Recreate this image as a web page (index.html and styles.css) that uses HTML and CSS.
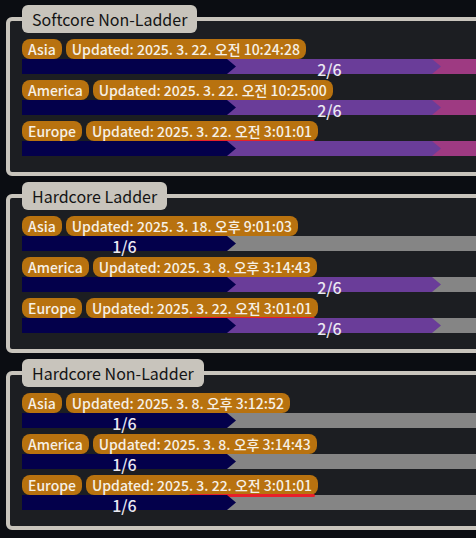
FILE: index.html
```html
<!DOCTYPE html>
<html lang="en">
<head>
<meta charset="utf-8">
<title>DClone Status</title>
<link rel="stylesheet" href="styles.css">
</head>
<body>
<main class="page">
  <fieldset class="group">
    <legend class="group-title">Softcore Non-Ladder</legend>
    <div class="rows">
      <div class="row">
        <div class="badges"><span class="badge">Asia</span><span class="badge">Updated: 2025. 3. 22. 오전 10:24:28</span></div>
        <div class="bar rest-magenta"><div class="seg s1"></div><div class="seg s2">2/6</div></div>
      </div>
      <div class="row">
        <div class="badges"><span class="badge">America</span><span class="badge">Updated: 2025. 3. 22. 오전 10:25:00</span></div>
        <div class="bar rest-magenta"><div class="seg s1"></div><div class="seg s2">2/6</div></div>
      </div>
      <div class="row">
        <div class="badges"><span class="badge">Europe</span><span class="badge">Updated: 2025<span class="mark">. 3. 22. 오전 3:01:01</span></span></div>
        <div class="bar rest-magenta"><div class="seg s1"></div><div class="seg s2"></div></div>
      </div>
    </div>
  </fieldset>
  <fieldset class="group">
    <legend class="group-title">Hardcore Ladder</legend>
    <div class="rows">
      <div class="row">
        <div class="badges"><span class="badge">Asia</span><span class="badge">Updated: 2025. 3. 18. 오후 9:01:03</span></div>
        <div class="bar rest-gray"><div class="seg s1">1/6</div></div>
      </div>
      <div class="row">
        <div class="badges"><span class="badge">America</span><span class="badge">Updated: 2025. 3. 8. 오후 3:14:43</span></div>
        <div class="bar rest-gray"><div class="seg s1"></div><div class="seg s2">2/6</div></div>
      </div>
      <div class="row">
        <div class="badges"><span class="badge">Europe</span><span class="badge">Updated: 2025<span class="mark">. 3. 22. 오전 3:01:01</span></span></div>
        <div class="bar rest-gray"><div class="seg s1"></div><div class="seg s2">2/6</div></div>
      </div>
    </div>
  </fieldset>
  <fieldset class="group">
    <legend class="group-title">Hardcore Non-Ladder</legend>
    <div class="rows">
      <div class="row">
        <div class="badges"><span class="badge">Asia</span><span class="badge">Updated: 2025. 3. 8. 오후 3:12:52</span></div>
        <div class="bar rest-gray"><div class="seg s1">1/6</div></div>
      </div>
      <div class="row">
        <div class="badges"><span class="badge">America</span><span class="badge">Updated: 2025. 3. 8. 오후 3:14:43</span></div>
        <div class="bar rest-gray"><div class="seg s1">1/6</div></div>
      </div>
      <div class="row">
        <div class="badges"><span class="badge">Europe</span><span class="badge">Updated: 2025<span class="mark">. 3. 22. 오전 3:01:01</span></span></div>
        <div class="bar rest-gray"><div class="seg s1">1/6</div></div>
      </div>
    </div>
  </fieldset>
</main>
</body>
</html>
```

FILE: styles.css
```css
html {
  overflow: hidden;
  background: #0b0d12;
}
body {
  margin: 0;
  font-family: "Noto Sans CJK KR", "Noto Sans", sans-serif;
}
.page {
  padding: 5px 0 0 6px;
  display: flex;
  flex-direction: column;
  gap: 6px;
}
.group {
  box-sizing: border-box;
  width: 1300px;
  min-width: 0;
  margin: 0;
  border: 4px solid #c8c4bc;
  border-radius: 6px;
  padding: 6px 12px 16px 12px;
  background: #1c1e22;
}
.group-title {
  background: #c8c4bc;
  color: #141414;
  font-size: 16px;
  font-weight: 400;
  line-height: 28px;
  height: 28px;
  padding: 0 10px;
  border-radius: 6px;
}
.rows {
  display: flex;
  flex-direction: column;
  gap: 6px;
}
.badges {
  display: flex;
  gap: 4px;
  height: 20px;
}
.badge {
  background: #b8720f;
  color: #f6f0e6;
  font-size: 14px;
  font-weight: 500;
  line-height: 20px;
  height: 20px;
  padding: 0 6px;
  border-radius: 8px;
  white-space: nowrap;
}
.mark {
  position: relative;
}
.mark::after {
  content: "";
  position: absolute;
  left: 0;
  right: -3px;
  bottom: -2px;
  height: 3px;
  border-radius: 2px;
  background: #e8202a;
}
.bar {
  display: flex;
  height: 15px;
}
.rest-magenta { background: #9e3a82; }
.rest-gray { background: #858585; }
.seg {
  flex: none;
  position: relative;
  width: 214px;
  margin-right: -9px;
  padding-right: 9px;
  box-sizing: border-box;
  color: #ebe8f2;
  font-size: 16px;
  font-weight: 500;
  line-height: 20px;
  text-align: center;
}
.seg::before {
  content: "";
  position: absolute;
  inset: 0;
  z-index: -1;
  clip-path: polygon(0 0, calc(100% - 9px) 0, 100% 50%, calc(100% - 9px) 100%, 0 100%);
}
.s1 { z-index: 2; }
.s2 { z-index: 1; }
.s1::before { background: #03004b; }
.s2::before { background: #6a3d99; }
```
